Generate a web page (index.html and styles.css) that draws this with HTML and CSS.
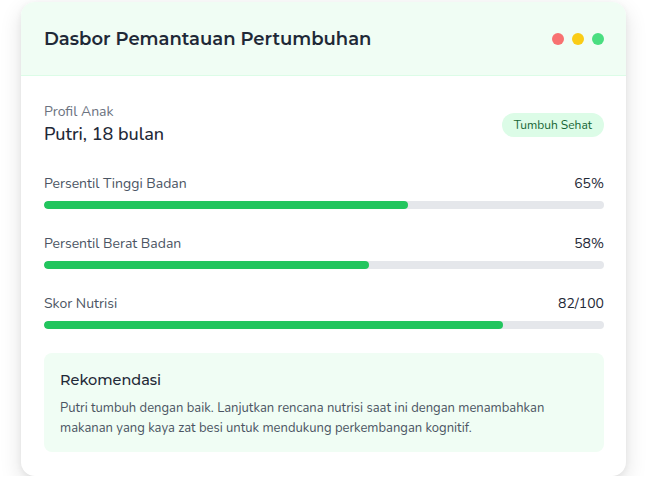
FILE: index.html
```html
<!DOCTYPE html>
<html lang="id">
<head>
<meta charset="utf-8">
<title>Dasbor Pemantauan Pertumbuhan</title>
<link rel="stylesheet" href="styles.css">
</head>
<body>
<div class="card">
  <div class="header">
    <h1 class="title">Dasbor Pemantauan Pertumbuhan</h1>
    <div class="dots">
      <span class="dot red"></span>
      <span class="dot yellow"></span>
      <span class="dot green"></span>
    </div>
  </div>
  <div class="body">
    <div class="profile">
      <div>
        <div class="profile-label">Profil Anak</div>
        <div class="profile-name">Putri, 18 bulan</div>
      </div>
      <span class="badge">Tumbuh Sehat</span>
    </div>
    <div class="metrics">
      <div class="metric">
        <div class="metric-row"><span class="metric-label">Persentil Tinggi Badan</span><span class="metric-value">65%</span></div>
        <div class="track"><div class="fill" style="width:65%"></div></div>
      </div>
      <div class="metric">
        <div class="metric-row"><span class="metric-label">Persentil Berat Badan</span><span class="metric-value">58%</span></div>
        <div class="track"><div class="fill" style="width:58%"></div></div>
      </div>
      <div class="metric">
        <div class="metric-row"><span class="metric-label">Skor Nutrisi</span><span class="metric-value">82/100</span></div>
        <div class="track"><div class="fill" style="width:82%"></div></div>
      </div>
    </div>
    <div class="reco">
      <div class="reco-title">Rekomendasi</div>
      <p class="reco-text">Putri tumbuh dengan baik. Lanjutkan rencana nutrisi saat ini dengan menambahkan makanan yang kaya zat besi untuk mendukung perkembangan kognitif.</p>
    </div>
  </div>
</div>
</body>
</html>
```
FILE: styles.css
```css
html, body {
  margin: 0;
  padding: 0;
  background: #ffffff;
}
body {
  font-family: "Nunito", "Lato", "Open Sans", sans-serif;
  color: #1f2937;
  padding-top: 2px;
}
.card {
  margin-left: 21px;
  width: 605px;
  background: #ffffff;
  border-radius: 14px;
  overflow: hidden;
  box-shadow: 0 8px 22px rgba(0, 0, 0, 0.12), 0 2px 6px rgba(0, 0, 0, 0.06);
}
.header {
  height: 73px;
  background: #f0fdf4;
  border-bottom: 1px solid #dcfce7;
  display: flex;
  align-items: center;
  justify-content: space-between;
  padding: 0 22px 0 23px;
}
.title {
  margin: 0;
  font-family: "Montserrat", "Lato", sans-serif;
  font-size: 18px;
  font-weight: 600;
  color: #1f2937;
  line-height: 28px;
}
.dots {
  display: flex;
  gap: 8px;
}
.dot {
  width: 12px;
  height: 12px;
  border-radius: 50%;
}
.red { background: #f87171; }
.yellow { background: #facc15; }
.green { background: #4ade80; }
.body {
  padding: 26px 22px 24px 23px;
}
.profile {
  display: flex;
  justify-content: space-between;
  align-items: center;
}
.profile-label {
  font-size: 14px;
  line-height: 20px;
  color: #6b7280;
}
.profile-name {
  font-size: 18px;
  line-height: 24px;
  font-weight: 500;
  color: #1f2937;
}
.badge {
  background: #dcfce7;
  color: #166534;
  font-size: 12px;
  line-height: 16px;
  padding: 4px 12px;
  border-radius: 9999px;
  margin-top: 2px;
}
.metrics {
  margin-top: 28px;
  display: flex;
  flex-direction: column;
  gap: 25px;
}
.metric-row {
  display: flex;
  justify-content: space-between;
  font-size: 14px;
  line-height: 20px;
  margin-bottom: 7px;
}
.metric-label { color: #4b5563; }
.metric-value { color: #1f2937; }
.track {
  height: 8px;
  background: #e5e7eb;
  border-radius: 9999px;
  overflow: hidden;
}
.fill {
  height: 100%;
  background: #22c55e;
  border-radius: 9999px;
}
.reco {
  margin-top: 24px;
  background: #f0fdf4;
  border-radius: 8px;
  padding: 16px 16px 14px;
}
.reco-title {
  font-family: "Montserrat", "Lato", sans-serif;
  font-size: 14.5px;
  line-height: 22px;
  font-weight: 500;
  color: #1f2937;
}
.reco-text {
  margin: 7px 0 0;
  font-size: 13px;
  line-height: 20px;
  color: #4b5563;
}
```
